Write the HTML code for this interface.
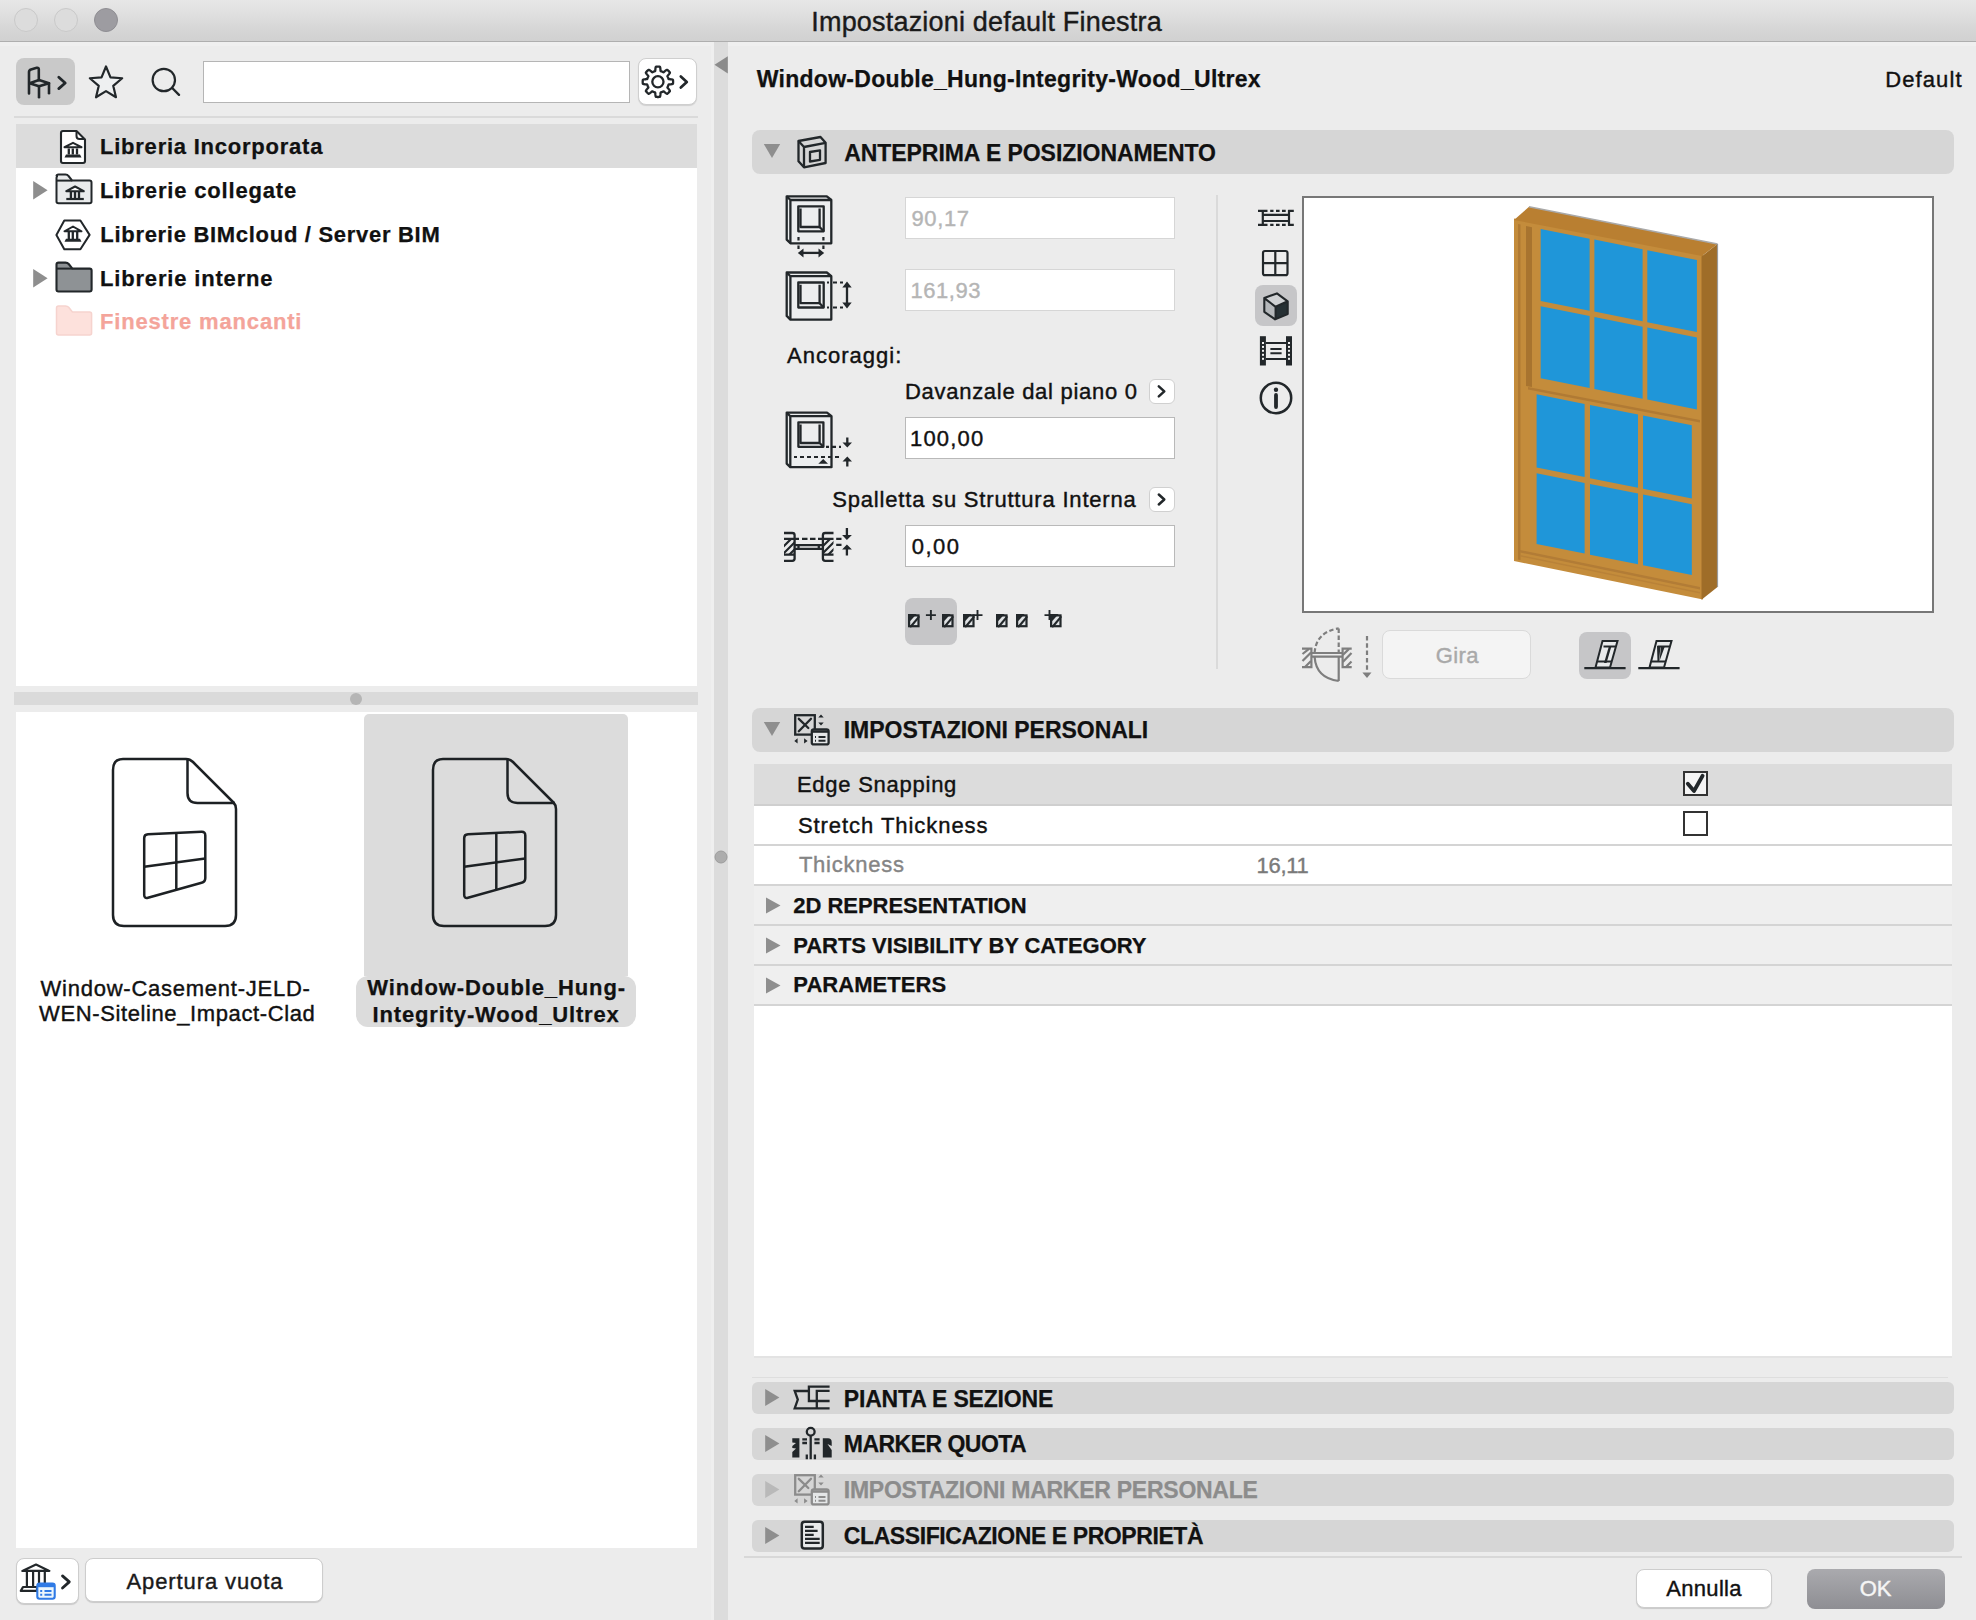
<!DOCTYPE html>
<html><head><meta charset="utf-8">
<style>
html,body{margin:0;padding:0}
body{width:1976px;height:1620px;overflow:hidden;background:#ececec;position:relative;font-family:"Liberation Sans",sans-serif;color:#111}
.a{position:absolute}
.t{position:absolute;white-space:pre;line-height:1}
.b{font-weight:bold}
svg{position:absolute;overflow:visible}
</style></head><body>

<!-- TITLE BAR -->
<div class="a" style="left:0;top:0;width:1976px;height:41px;background:linear-gradient(#e7e7e7 0%,#dedede 40%,#d5d5d5 75%,#d1d1d1 100%)"></div>
<div class="a" style="left:0;top:41px;width:1976px;height:1px;background:#aeaeae"></div>
<div class="a" style="left:0;top:42px;width:1976px;height:4px;background:#efefef"></div>
<div class="a" style="left:14px;top:8px;width:22px;height:22px;border-radius:50%;background:#dcdcdc;border:1px solid #c9c9c9"></div>
<div class="a" style="left:54px;top:8px;width:22px;height:22px;border-radius:50%;background:#dcdcdc;border:1px solid #c9c9c9"></div>
<div class="a" style="left:94px;top:8px;width:22px;height:22px;border-radius:50%;background:#9d9ca1;border:1px solid #8f8e93"></div>

<!-- LEFT PANEL -->
<div class="a" style="left:16px;top:58px;width:59px;height:47px;border-radius:8px;background:#c9c9c9"></div>
<div class="a" style="left:203px;top:61px;width:427px;height:42px;background:#fff;border:1px solid #b5b5b5;box-sizing:border-box"></div>
<div class="a" style="left:638px;top:58px;width:59px;height:47px;border-radius:8px;background:#fff;border:1px solid #cfcfcf;box-sizing:border-box;box-shadow:0 1px 1px rgba(0,0,0,0.12)"></div>
<div class="a" style="left:14px;top:116px;width:684px;height:2px;background:#dadada"></div>

<div class="a" style="left:16px;top:124px;width:681px;height:562px;background:#fff"></div>
<div class="a" style="left:16px;top:124px;width:681px;height:44px;background:#dcdcdc"></div>

<!-- splitter -->
<div class="a" style="left:14px;top:692px;width:684px;height:13px;background:#dadada"></div>
<div class="a" style="left:350px;top:693px;width:12px;height:12px;border-radius:50%;background:#b5b5b5"></div>

<div class="a" style="left:16px;top:712px;width:681px;height:836px;background:#fff"></div>
<div class="a" style="left:364px;top:714px;width:264px;height:262px;border-radius:5px 5px 0 0;background:#dcdcdc"></div>
<div class="a" style="left:356px;top:976px;width:280px;height:51px;border-radius:12px;background:#dcdcdc"></div>

<!-- bottom buttons -->
<div class="a" style="left:16px;top:1558px;width:63px;height:46px;border-radius:8px;background:#fff;border:1px solid #cdcdcd;box-sizing:border-box;box-shadow:0 1px 1px rgba(0,0,0,0.15)"></div>
<div class="a" style="left:85px;top:1558px;width:238px;height:44px;border-radius:8px;background:#fff;border:1px solid #cdcdcd;box-sizing:border-box;box-shadow:0 1px 1px rgba(0,0,0,0.15)"></div>

<!-- DIVIDER -->
<div class="a" style="left:711px;top:42px;width:3px;height:1578px;background:#efefef"></div>
<div class="a" style="left:714px;top:42px;width:14px;height:1578px;background:#dcdcdc"></div>

<!-- RIGHT PANEL -->

<div class="a" style="left:752px;top:130px;width:1202px;height:44px;border-radius:8px;background:#d6d6d6"></div>

<div class="a" style="left:905px;top:197px;width:270px;height:42px;background:#fff;border:1px solid #d6d6d6;box-sizing:border-box"></div>
<div class="a" style="left:905px;top:269px;width:270px;height:42px;background:#fff;border:1px solid #d6d6d6;box-sizing:border-box"></div>

<div class="a" style="left:1149px;top:379px;width:26px;height:25px;border-radius:6px;background:#fff;border:1px solid #d0d0d0;box-sizing:border-box"></div>
<div class="a" style="left:905px;top:417px;width:270px;height:42px;background:#fff;border:1px solid #b9b9b9;box-sizing:border-box"></div>

<div class="a" style="left:1149px;top:487px;width:26px;height:25px;border-radius:6px;background:#fff;border:1px solid #d0d0d0;box-sizing:border-box"></div>
<div class="a" style="left:905px;top:525px;width:270px;height:42px;background:#fff;border:1px solid #b9b9b9;box-sizing:border-box"></div>

<div class="a" style="left:905px;top:598px;width:52px;height:47px;border-radius:8px;background:#c6c6c8"></div>

<div class="a" style="left:1216px;top:195px;width:2px;height:474px;background:#dadada"></div>

<div class="a" style="left:1255px;top:285px;width:42px;height:41px;border-radius:8px;background:#c6c6c8"></div>

<div class="a" style="left:1302px;top:196px;width:632px;height:417px;background:#fff;border:2px solid #777;box-sizing:border-box"></div>

<div class="a" style="left:1382px;top:630px;width:149px;height:49px;border-radius:8px;background:#f4f4f4;border:1px solid #dadada;box-sizing:border-box"></div>
<div class="a" style="left:1579px;top:632px;width:52px;height:47px;border-radius:8px;background:#c6c6c8"></div>

<div class="a" style="left:752px;top:708px;width:1202px;height:44px;border-radius:8px;background:#d6d6d6"></div>

<!-- table -->
<div class="a" style="left:754px;top:764px;width:1198px;height:592px;background:#fff"></div>
<div class="a" style="left:754px;top:764px;width:1198px;height:41px;background:#dcdcdc"></div>
<div class="a" style="left:754px;top:885px;width:1198px;height:120px;background:#efefef"></div>
<div class="a" style="left:754px;top:804px;width:1198px;height:2px;background:#cfcfcf"></div>
<div class="a" style="left:754px;top:844px;width:1198px;height:2px;background:#d4d4d4"></div>
<div class="a" style="left:754px;top:884px;width:1198px;height:2px;background:#d4d4d4"></div>
<div class="a" style="left:754px;top:924px;width:1198px;height:2px;background:#d4d4d4"></div>
<div class="a" style="left:754px;top:964px;width:1198px;height:2px;background:#d4d4d4"></div>
<div class="a" style="left:754px;top:1004px;width:1198px;height:2px;background:#d4d4d4"></div>

<div class="a" style="left:1683px;top:771px;width:25px;height:25px;border:2px solid #333;box-sizing:border-box;background:#f4f4f4"></div>
<div class="a" style="left:1683px;top:811px;width:25px;height:25px;border:2px solid #333;box-sizing:border-box;background:#fff"></div>


<div class="a" style="left:754px;top:1356px;width:1198px;height:2px;background:#e3e3e3"></div>
<div class="a" style="left:752px;top:1377px;width:1196px;height:1px;background:#dedede"></div>
<div class="a" style="left:752px;top:1382px;width:1202px;height:32px;border-radius:6px;background:#d6d6d6"></div>
<div class="a" style="left:752px;top:1428px;width:1202px;height:32px;border-radius:6px;background:#d6d6d6"></div>
<div class="a" style="left:752px;top:1474px;width:1202px;height:32px;border-radius:6px;background:#d6d6d6"></div>
<div class="a" style="left:752px;top:1520px;width:1202px;height:32px;border-radius:6px;background:#d6d6d6"></div>

<div class="a" style="left:744px;top:1556px;width:1218px;height:2px;background:#d8d8d8"></div>

<div class="a" style="left:1636px;top:1569px;width:136px;height:39px;border-radius:8px;background:#fff;border:1px solid #cdcdcd;box-sizing:border-box;box-shadow:0 1px 1px rgba(0,0,0,0.15)"></div>
<div class="a" style="left:1807px;top:1569px;width:138px;height:40px;border-radius:8px;background:linear-gradient(#aaaaae,#8e8e93)"></div>

<div class="t" style="left:811.3px;top:8.9px;font-size:27px;-webkit-text-stroke:0.4px;letter-spacing:0.186px;color:#1a1a1a">Impostazioni default Finestra</div>
<div class="t" style="left:100.0px;top:135.8px;font-size:22px;font-weight:bold;-webkit-text-stroke:0.25px;letter-spacing:0.768px;color:#111">Libreria Incorporata</div>
<div class="t" style="left:100.0px;top:179.7px;font-size:22px;font-weight:bold;-webkit-text-stroke:0.25px;letter-spacing:0.824px;color:#111">Librerie collegate</div>
<div class="t" style="left:100.3px;top:224.0px;font-size:22px;font-weight:bold;-webkit-text-stroke:0.25px;letter-spacing:0.703px;color:#111">Librerie BIMcloud / Server BIM</div>
<div class="t" style="left:100.0px;top:268.2px;font-size:22px;font-weight:bold;-webkit-text-stroke:0.25px;letter-spacing:0.827px;color:#111">Librerie interne</div>
<div class="t" style="left:100.0px;top:311.3px;font-size:22px;font-weight:bold;-webkit-text-stroke:0.25px;letter-spacing:0.825px;color:#f4a49a">Finestre mancanti</div>
<div class="t" style="left:40.6px;top:977.5px;font-size:22px;-webkit-text-stroke:0.4px;letter-spacing:0.75px;color:#111">Window-Casement-JELD-</div>
<div class="t" style="left:39.1px;top:1003.4px;font-size:22px;-webkit-text-stroke:0.4px;letter-spacing:0.609px;color:#111">WEN-Siteline_Impact-Clad</div>
<div class="t" style="left:367.3px;top:977.3px;font-size:22px;font-weight:bold;-webkit-text-stroke:0.25px;letter-spacing:0.889px;color:#111">Window-Double_Hung-</div>
<div class="t" style="left:372.6px;top:1003.5px;font-size:22px;font-weight:bold;-webkit-text-stroke:0.25px;letter-spacing:0.84px;color:#111">Integrity-Wood_Ultrex</div>
<div class="t" style="left:126.5px;top:1571.0px;font-size:22px;-webkit-text-stroke:0.4px;letter-spacing:0.892px;color:#1a1a1a">Apertura vuota</div>
<div class="t" style="left:756.7px;top:67.7px;font-size:23px;font-weight:bold;-webkit-text-stroke:0.25px;letter-spacing:0.292px;color:#111">Window-Double_Hung-Integrity-Wood_Ultrex</div>
<div class="t" style="left:1885.2px;top:69.3px;font-size:22px;-webkit-text-stroke:0.4px;letter-spacing:1.1px;color:#111">Default</div>
<div class="t" style="left:844.2px;top:141.5px;font-size:23px;font-weight:bold;-webkit-text-stroke:0.25px;letter-spacing:-0.056px;color:#111">ANTEPRIMA E POSIZIONAMENTO</div>
<div class="t" style="left:911.5px;top:208.2px;font-size:22px;-webkit-text-stroke:0.4px;letter-spacing:0.6px;color:#b5b5b5">90,17</div>
<div class="t" style="left:910.5px;top:280.4px;font-size:22px;-webkit-text-stroke:0.4px;letter-spacing:0.52px;color:#b5b5b5">161,93</div>
<div class="t" style="left:787.0px;top:345.1px;font-size:22px;-webkit-text-stroke:0.4px;letter-spacing:1.022px;color:#111">Ancoraggi:</div>
<div class="t" style="left:905.0px;top:381.3px;font-size:22px;-webkit-text-stroke:0.4px;letter-spacing:0.71px;color:#111">Davanzale dal piano 0</div>
<div class="t" style="left:910.0px;top:428.0px;font-size:22px;-webkit-text-stroke:0.4px;letter-spacing:1.2px;color:#111">100,00</div>
<div class="t" style="left:832.3px;top:489.4px;font-size:22px;-webkit-text-stroke:0.4px;letter-spacing:0.807px;color:#111">Spalletta su Struttura Interna</div>
<div class="t" style="left:911.8px;top:536.1px;font-size:22px;-webkit-text-stroke:0.4px;letter-spacing:1.467px;color:#111">0,00</div>
<div class="t" style="left:1435.7px;top:644.5px;font-size:22px;-webkit-text-stroke:0.4px;letter-spacing:0.4px;color:#a9a9a9">Gira</div>
<div class="t" style="left:843.7px;top:719.4px;font-size:23px;font-weight:bold;-webkit-text-stroke:0.25px;letter-spacing:-0.019px;color:#111">IMPOSTAZIONI PERSONALI</div>
<div class="t" style="left:796.9px;top:774.4px;font-size:22px;-webkit-text-stroke:0.4px;letter-spacing:0.75px;color:#111">Edge Snapping</div>
<div class="t" style="left:797.9px;top:814.5px;font-size:22px;-webkit-text-stroke:0.4px;letter-spacing:0.95px;color:#111">Stretch Thickness</div>
<div class="t" style="left:798.9px;top:854.0px;font-size:22px;-webkit-text-stroke:0.4px;letter-spacing:0.775px;color:#858585">Thickness</div>
<div class="t" style="left:1256.6px;top:854.7px;font-size:22px;-webkit-text-stroke:0.4px;letter-spacing:-0.3px;color:#7a7a7a">16,11</div>
<div class="t" style="left:793.3px;top:894.9px;font-size:22px;font-weight:bold;-webkit-text-stroke:0.25px;letter-spacing:-0.037px;color:#111">2D REPRESENTATION</div>
<div class="t" style="left:793.3px;top:934.5px;font-size:22px;font-weight:bold;-webkit-text-stroke:0.25px;letter-spacing:-0.052px;color:#111">PARTS VISIBILITY BY CATEGORY</div>
<div class="t" style="left:793.3px;top:973.9px;font-size:22px;font-weight:bold;-webkit-text-stroke:0.25px;letter-spacing:0.044px;color:#111">PARAMETERS</div>
<div class="t" style="left:843.8px;top:1387.6px;font-size:23px;font-weight:bold;-webkit-text-stroke:0.25px;letter-spacing:-0.173px;color:#111">PIANTA E SEZIONE</div>
<div class="t" style="left:843.8px;top:1433.3px;font-size:23px;font-weight:bold;-webkit-text-stroke:0.25px;letter-spacing:-0.527px;color:#111">MARKER QUOTA</div>
<div class="t" style="left:843.8px;top:1479.0px;font-size:23px;font-weight:bold;-webkit-text-stroke:0.25px;letter-spacing:-0.257px;color:#8c8c8c">IMPOSTAZIONI MARKER PERSONALE</div>
<div class="t" style="left:843.8px;top:1525.2px;font-size:23px;font-weight:bold;-webkit-text-stroke:0.25px;letter-spacing:-0.415px;color:#111">CLASSIFICAZIONE E PROPRIETÀ</div>
<div class="t" style="left:1666.2px;top:1578.3px;font-size:22px;-webkit-text-stroke:0.4px;letter-spacing:0.333px;color:#111">Annulla</div>
<div class="t" style="left:1859.7px;top:1578.3px;font-size:22px;-webkit-text-stroke:0.4px;letter-spacing:0.0px;color:#f5f5f5">OK</div>
<svg width="1976" height="1620" viewBox="0 0 1976 1620" style="position:absolute;left:0;top:0"><g fill="none" stroke="#22272a" stroke-width="2.6" stroke-linecap="round" stroke-linejoin="round"><path d="M29,93.5 V72 Q29,70 31,69.4 L36.8,67.8 Q38.8,67.3 38.8,69.3 V80.3"/><path d="M29.6,83.2 L39,80 L49,83.2 L39,86.3 Z"/><path d="M49,83.2 V93.2"/><path d="M39,86.3 V97.3"/></g>
<path d="M58.8,77.3 L65.2,83 L58.8,88.6" fill="none" stroke="#22272a" stroke-width="2.8" stroke-linecap="round" stroke-linejoin="round"/>
<path d="M106.00,66.50 L110.47,77.35 L122.17,78.25 L113.23,85.85 L115.99,97.25 L106.00,91.10 L96.01,97.25 L98.77,85.85 L89.83,78.25 L101.53,77.35Z" fill="#eef0f1" stroke="#22272a" stroke-width="2.2" stroke-linejoin="round"/>
<circle cx="163.8" cy="80" r="11.2" fill="none" stroke="#22272a" stroke-width="2.2"/>
<path d="M172.2,88 L179,94.8" stroke="#22272a" stroke-width="2.4" stroke-linecap="round"/>
<path d="M657.90,66.60 L658.03,66.60 L658.17,66.60 L658.30,66.61 L658.43,66.61 L658.56,66.61 L658.70,66.62 L658.83,66.63 L658.96,66.64 L659.09,66.65 L659.22,66.66 L659.36,66.67 L659.49,66.68 L659.62,66.70 L659.75,66.71 L659.88,66.78 L659.99,66.93 L660.09,67.15 L660.18,67.44 L660.25,67.77 L660.31,68.14 L660.36,68.53 L660.40,68.94 L660.43,69.35 L660.46,69.74 L660.49,70.11 L660.52,70.44 L660.56,70.73 L660.60,70.95 L660.67,71.10 L660.75,71.17 L660.84,71.20 L660.93,71.23 L661.02,71.25 L661.12,71.28 L661.21,71.31 L661.30,71.34 L661.39,71.37 L661.48,71.40 L661.57,71.43 L661.66,71.46 L661.75,71.50 L661.84,71.53 L661.93,71.57 L662.02,71.60 L662.11,71.64 L662.20,71.67 L662.29,71.71 L662.37,71.75 L662.46,71.79 L662.55,71.83 L662.64,71.87 L662.72,71.91 L662.81,71.96 L662.89,72.00 L662.98,72.04 L663.06,72.09 L663.15,72.13 L663.23,72.18 L663.32,72.23 L663.40,72.27 L663.51,72.28 L663.66,72.22 L663.85,72.09 L664.08,71.91 L664.33,71.70 L664.61,71.46 L664.91,71.20 L665.23,70.94 L665.54,70.68 L665.86,70.44 L666.16,70.22 L666.45,70.03 L666.71,69.89 L666.94,69.80 L667.12,69.78 L667.26,69.82 L667.36,69.90 L667.47,69.99 L667.57,70.07 L667.67,70.16 L667.77,70.24 L667.87,70.33 L667.97,70.42 L668.07,70.50 L668.17,70.59 L668.27,70.68 L668.36,70.77 L668.46,70.87 L668.55,70.96 L668.65,71.05 L668.74,71.15 L668.83,71.24 L668.93,71.34 L669.02,71.43 L669.11,71.53 L669.20,71.63 L669.28,71.73 L669.37,71.83 L669.46,71.93 L669.54,72.03 L669.63,72.13 L669.71,72.23 L669.80,72.34 L669.88,72.44 L669.92,72.58 L669.90,72.76 L669.81,72.99 L669.67,73.25 L669.48,73.54 L669.26,73.84 L669.02,74.16 L668.76,74.47 L668.50,74.79 L668.24,75.09 L668.00,75.37 L667.79,75.62 L667.61,75.85 L667.48,76.04 L667.42,76.19 L667.43,76.30 L667.47,76.38 L667.52,76.47 L667.57,76.55 L667.61,76.64 L667.66,76.72 L667.70,76.81 L667.74,76.89 L667.79,76.98 L667.83,77.06 L667.87,77.15 L667.91,77.24 L667.95,77.33 L667.99,77.41 L668.03,77.50 L668.06,77.59 L668.10,77.68 L668.13,77.77 L668.17,77.86 L668.20,77.95 L668.24,78.04 L668.27,78.13 L668.30,78.22 L668.33,78.31 L668.36,78.40 L668.39,78.49 L668.42,78.58 L668.45,78.68 L668.47,78.77 L668.50,78.86 L668.53,78.95 L668.60,79.03 L668.75,79.10 L668.97,79.14 L669.26,79.18 L669.59,79.21 L669.96,79.24 L670.35,79.27 L670.76,79.30 L671.17,79.34 L671.56,79.39 L671.93,79.45 L672.26,79.52 L672.55,79.61 L672.77,79.71 L672.92,79.82 L672.99,79.95 L673.00,80.08 L673.02,80.21 L673.03,80.34 L673.04,80.48 L673.05,80.61 L673.06,80.74 L673.07,80.87 L673.08,81.00 L673.09,81.14 L673.09,81.27 L673.09,81.40 L673.10,81.53 L673.10,81.67 L673.10,81.80 L673.10,81.93 L673.10,82.07 L673.09,82.20 L673.09,82.33 L673.09,82.46 L673.08,82.60 L673.07,82.73 L673.06,82.86 L673.05,82.99 L673.04,83.12 L673.03,83.26 L673.02,83.39 L673.00,83.52 L672.99,83.65 L672.92,83.78 L672.77,83.89 L672.55,83.99 L672.26,84.08 L671.93,84.15 L671.56,84.21 L671.17,84.26 L670.76,84.30 L670.35,84.33 L669.96,84.36 L669.59,84.39 L669.26,84.42 L668.97,84.46 L668.75,84.50 L668.60,84.57 L668.53,84.65 L668.50,84.74 L668.47,84.83 L668.45,84.92 L668.42,85.02 L668.39,85.11 L668.36,85.20 L668.33,85.29 L668.30,85.38 L668.27,85.47 L668.24,85.56 L668.20,85.65 L668.17,85.74 L668.13,85.83 L668.10,85.92 L668.06,86.01 L668.03,86.10 L667.99,86.19 L667.95,86.27 L667.91,86.36 L667.87,86.45 L667.83,86.54 L667.79,86.62 L667.74,86.71 L667.70,86.79 L667.66,86.88 L667.61,86.96 L667.57,87.05 L667.52,87.13 L667.47,87.22 L667.43,87.30 L667.42,87.41 L667.48,87.56 L667.61,87.75 L667.79,87.98 L668.00,88.23 L668.24,88.51 L668.50,88.81 L668.76,89.13 L669.02,89.44 L669.26,89.76 L669.48,90.06 L669.67,90.35 L669.81,90.61 L669.90,90.84 L669.92,91.02 L669.88,91.16 L669.80,91.26 L669.71,91.37 L669.63,91.47 L669.54,91.57 L669.46,91.67 L669.37,91.77 L669.28,91.87 L669.20,91.97 L669.11,92.07 L669.02,92.17 L668.93,92.26 L668.83,92.36 L668.74,92.45 L668.65,92.55 L668.55,92.64 L668.46,92.73 L668.36,92.83 L668.27,92.92 L668.17,93.01 L668.07,93.10 L667.97,93.18 L667.87,93.27 L667.77,93.36 L667.67,93.44 L667.57,93.53 L667.47,93.61 L667.36,93.70 L667.26,93.78 L667.12,93.82 L666.94,93.80 L666.71,93.71 L666.45,93.57 L666.16,93.38 L665.86,93.16 L665.54,92.92 L665.23,92.66 L664.91,92.40 L664.61,92.14 L664.33,91.90 L664.08,91.69 L663.85,91.51 L663.66,91.38 L663.51,91.32 L663.40,91.33 L663.32,91.37 L663.23,91.42 L663.15,91.47 L663.06,91.51 L662.98,91.56 L662.89,91.60 L662.81,91.64 L662.72,91.69 L662.64,91.73 L662.55,91.77 L662.46,91.81 L662.37,91.85 L662.29,91.89 L662.20,91.93 L662.11,91.96 L662.02,92.00 L661.93,92.03 L661.84,92.07 L661.75,92.10 L661.66,92.14 L661.57,92.17 L661.48,92.20 L661.39,92.23 L661.30,92.26 L661.21,92.29 L661.12,92.32 L661.02,92.35 L660.93,92.37 L660.84,92.40 L660.75,92.43 L660.67,92.50 L660.60,92.65 L660.56,92.87 L660.52,93.16 L660.49,93.49 L660.46,93.86 L660.43,94.25 L660.40,94.66 L660.36,95.07 L660.31,95.46 L660.25,95.83 L660.18,96.16 L660.09,96.45 L659.99,96.67 L659.88,96.82 L659.75,96.89 L659.62,96.90 L659.49,96.92 L659.36,96.93 L659.22,96.94 L659.09,96.95 L658.96,96.96 L658.83,96.97 L658.70,96.98 L658.56,96.99 L658.43,96.99 L658.30,96.99 L658.17,97.00 L658.03,97.00 L657.90,97.00 L657.77,97.00 L657.63,97.00 L657.50,96.99 L657.37,96.99 L657.24,96.99 L657.10,96.98 L656.97,96.97 L656.84,96.96 L656.71,96.95 L656.58,96.94 L656.44,96.93 L656.31,96.92 L656.18,96.90 L656.05,96.89 L655.92,96.82 L655.81,96.67 L655.71,96.45 L655.62,96.16 L655.55,95.83 L655.49,95.46 L655.44,95.07 L655.40,94.66 L655.37,94.25 L655.34,93.86 L655.31,93.49 L655.28,93.16 L655.24,92.87 L655.20,92.65 L655.13,92.50 L655.05,92.43 L654.96,92.40 L654.87,92.37 L654.78,92.35 L654.68,92.32 L654.59,92.29 L654.50,92.26 L654.41,92.23 L654.32,92.20 L654.23,92.17 L654.14,92.14 L654.05,92.10 L653.96,92.07 L653.87,92.03 L653.78,92.00 L653.69,91.96 L653.60,91.93 L653.51,91.89 L653.43,91.85 L653.34,91.81 L653.25,91.77 L653.16,91.73 L653.08,91.69 L652.99,91.64 L652.91,91.60 L652.82,91.56 L652.74,91.51 L652.65,91.47 L652.57,91.42 L652.48,91.37 L652.40,91.33 L652.29,91.32 L652.14,91.38 L651.95,91.51 L651.72,91.69 L651.47,91.90 L651.19,92.14 L650.89,92.40 L650.57,92.66 L650.26,92.92 L649.94,93.16 L649.64,93.38 L649.35,93.57 L649.09,93.71 L648.86,93.80 L648.68,93.82 L648.54,93.78 L648.44,93.70 L648.33,93.61 L648.23,93.53 L648.13,93.44 L648.03,93.36 L647.93,93.27 L647.83,93.18 L647.73,93.10 L647.63,93.01 L647.53,92.92 L647.44,92.83 L647.34,92.73 L647.25,92.64 L647.15,92.55 L647.06,92.45 L646.97,92.36 L646.87,92.26 L646.78,92.17 L646.69,92.07 L646.60,91.97 L646.52,91.87 L646.43,91.77 L646.34,91.67 L646.26,91.57 L646.17,91.47 L646.09,91.37 L646.00,91.26 L645.92,91.16 L645.88,91.02 L645.90,90.84 L645.99,90.61 L646.13,90.35 L646.32,90.06 L646.54,89.76 L646.78,89.44 L647.04,89.13 L647.30,88.81 L647.56,88.51 L647.80,88.23 L648.01,87.98 L648.19,87.75 L648.32,87.56 L648.38,87.41 L648.37,87.30 L648.33,87.22 L648.28,87.13 L648.23,87.05 L648.19,86.96 L648.14,86.88 L648.10,86.79 L648.06,86.71 L648.01,86.62 L647.97,86.54 L647.93,86.45 L647.89,86.36 L647.85,86.27 L647.81,86.19 L647.77,86.10 L647.74,86.01 L647.70,85.92 L647.67,85.83 L647.63,85.74 L647.60,85.65 L647.56,85.56 L647.53,85.47 L647.50,85.38 L647.47,85.29 L647.44,85.20 L647.41,85.11 L647.38,85.02 L647.35,84.92 L647.33,84.83 L647.30,84.74 L647.27,84.65 L647.20,84.57 L647.05,84.50 L646.83,84.46 L646.54,84.42 L646.21,84.39 L645.84,84.36 L645.45,84.33 L645.04,84.30 L644.63,84.26 L644.24,84.21 L643.87,84.15 L643.54,84.08 L643.25,83.99 L643.03,83.89 L642.88,83.78 L642.81,83.65 L642.80,83.52 L642.78,83.39 L642.77,83.26 L642.76,83.12 L642.75,82.99 L642.74,82.86 L642.73,82.73 L642.72,82.60 L642.71,82.46 L642.71,82.33 L642.71,82.20 L642.70,82.07 L642.70,81.93 L642.70,81.80 L642.70,81.67 L642.70,81.53 L642.71,81.40 L642.71,81.27 L642.71,81.14 L642.72,81.00 L642.73,80.87 L642.74,80.74 L642.75,80.61 L642.76,80.48 L642.77,80.34 L642.78,80.21 L642.80,80.08 L642.81,79.95 L642.88,79.82 L643.03,79.71 L643.25,79.61 L643.54,79.52 L643.87,79.45 L644.24,79.39 L644.63,79.34 L645.04,79.30 L645.45,79.27 L645.84,79.24 L646.21,79.21 L646.54,79.18 L646.83,79.14 L647.05,79.10 L647.20,79.03 L647.27,78.95 L647.30,78.86 L647.33,78.77 L647.35,78.68 L647.38,78.58 L647.41,78.49 L647.44,78.40 L647.47,78.31 L647.50,78.22 L647.53,78.13 L647.56,78.04 L647.60,77.95 L647.63,77.86 L647.67,77.77 L647.70,77.68 L647.74,77.59 L647.77,77.50 L647.81,77.41 L647.85,77.33 L647.89,77.24 L647.93,77.15 L647.97,77.06 L648.01,76.98 L648.06,76.89 L648.10,76.81 L648.14,76.72 L648.19,76.64 L648.23,76.55 L648.28,76.47 L648.33,76.38 L648.37,76.30 L648.38,76.19 L648.32,76.04 L648.19,75.85 L648.01,75.62 L647.80,75.37 L647.56,75.09 L647.30,74.79 L647.04,74.47 L646.78,74.16 L646.54,73.84 L646.32,73.54 L646.13,73.25 L645.99,72.99 L645.90,72.76 L645.88,72.58 L645.92,72.44 L646.00,72.34 L646.09,72.23 L646.17,72.13 L646.26,72.03 L646.34,71.93 L646.43,71.83 L646.52,71.73 L646.60,71.63 L646.69,71.53 L646.78,71.43 L646.87,71.34 L646.97,71.24 L647.06,71.15 L647.15,71.05 L647.25,70.96 L647.34,70.87 L647.44,70.77 L647.53,70.68 L647.63,70.59 L647.73,70.50 L647.83,70.42 L647.93,70.33 L648.03,70.24 L648.13,70.16 L648.23,70.07 L648.33,69.99 L648.44,69.90 L648.54,69.82 L648.68,69.78 L648.86,69.80 L649.09,69.89 L649.35,70.03 L649.64,70.22 L649.94,70.44 L650.26,70.68 L650.57,70.94 L650.89,71.20 L651.19,71.46 L651.47,71.70 L651.72,71.91 L651.95,72.09 L652.14,72.22 L652.29,72.28 L652.40,72.27 L652.48,72.23 L652.57,72.18 L652.65,72.13 L652.74,72.09 L652.82,72.04 L652.91,72.00 L652.99,71.96 L653.08,71.91 L653.16,71.87 L653.25,71.83 L653.34,71.79 L653.43,71.75 L653.51,71.71 L653.60,71.67 L653.69,71.64 L653.78,71.60 L653.87,71.57 L653.96,71.53 L654.05,71.50 L654.14,71.46 L654.23,71.43 L654.32,71.40 L654.41,71.37 L654.50,71.34 L654.59,71.31 L654.68,71.28 L654.78,71.25 L654.87,71.23 L654.96,71.20 L655.05,71.17 L655.13,71.10 L655.20,70.95 L655.24,70.73 L655.28,70.44 L655.31,70.11 L655.34,69.74 L655.37,69.35 L655.40,68.94 L655.44,68.53 L655.49,68.14 L655.55,67.77 L655.62,67.44 L655.71,67.15 L655.81,66.93 L655.92,66.78 L656.05,66.71 L656.18,66.70 L656.31,66.68 L656.44,66.67 L656.58,66.66 L656.71,66.65 L656.84,66.64 L656.97,66.63 L657.10,66.62 L657.24,66.61 L657.37,66.61 L657.50,66.61 L657.63,66.60 L657.77,66.60Z" fill="none" stroke="#22272a" stroke-width="2.3" stroke-linejoin="round"/>
<circle cx="657.9" cy="81.8" r="5.6" fill="none" stroke="#22272a" stroke-width="2.3"/>
<path d="M680.8,76.5 L686.8,82 L680.8,87.6" fill="none" stroke="#22272a" stroke-width="2.7" stroke-linecap="round" stroke-linejoin="round"/>
<path d="M63,131 H76.5 L85,139.5 V161 Q85,163 83,163 H63 Q61,163 61,161 V133 Q61,131 63,131 Z" fill="#fff" stroke="#22272a" stroke-width="2.1" stroke-linejoin="round"/>
<path d="M76.5,131 V136 Q76.5,139 79.5,139 H85" fill="none" stroke="#22272a" stroke-width="2"/>
<path d="M64.5,147.2 L73.0,142.8 L81.5,147.2 Z" fill="#fff" stroke="#22272a" stroke-width="2" stroke-linejoin="round"/><path d="M68.8,148.5 V154.5" stroke="#22272a" stroke-width="2.3"/><path d="M72.8,148.5 V154.5" stroke="#22272a" stroke-width="2.3"/><path d="M77,148.5 V154.5" stroke="#22272a" stroke-width="2.3"/><path d="M66.0,154.5 L80.0,154.5 L81.5,157.5 L64.5,157.5 Z" fill="#22272a"/>
<path d="M58,176 Q56.5,176 56.5,178 V201.5 Q56.5,203.2 58.5,203.2 H89.6 Q91.5,203.2 91.5,201.5 V182.5 Q91.5,180.6 89.5,180.6 H72.2 L68.5,176 Q67.5,174.4 65.5,174.4 H58.5 Q56.5,174.4 56.5,176" fill="#e9ebec" stroke="#22272a" stroke-width="2" stroke-linejoin="round"/>
<path d="M56.5,180.6 H72.2" stroke="#22272a" stroke-width="2"/>
<path d="M66.3,191.2 L75.05,186.5 L83.8,191.2 Z" fill="#fff" stroke="#22272a" stroke-width="2" stroke-linejoin="round"/><path d="M70.9,192 V198.5" stroke="#22272a" stroke-width="2.3"/><path d="M75,192 V198.5" stroke="#22272a" stroke-width="2.3"/><path d="M79,192 V198.5" stroke="#22272a" stroke-width="2.3"/><path d="M66.3,199 H83.8" stroke="#22272a" stroke-width="2.2"/>
<path d="M56.4,234.9 L64.3,220.5 H80.4 L89.6,234.9 L80.4,249.3 H64.3 Z" fill="#fff" stroke="#22272a" stroke-width="2.0" stroke-linejoin="round"/>
<path d="M64.5,231.3 L73.0,226.5 L81.5,231.3 Z" fill="#fff" stroke="#22272a" stroke-width="2" stroke-linejoin="round"/><path d="M68.8,232 V239" stroke="#22272a" stroke-width="2.3"/><path d="M72.8,232 V239" stroke="#22272a" stroke-width="2.3"/><path d="M77.2,232 V239" stroke="#22272a" stroke-width="2.3"/><path d="M66.0,238.8 L80.0,238.8 L81.5,241.8 L64.5,241.8 Z" fill="#22272a"/>
<path d="M58.5,262.6 H65.5 Q67.5,262.6 68.7,264 L72.4,268.6 H89.6 Q91.6,268.6 91.6,270.6 V289.5 Q91.6,291.5 89.6,291.5 H58.5 Q56.5,291.5 56.5,289.5 V264.6 Q56.5,262.6 58.5,262.6 Z" fill="#8e9295" stroke="#22272a" stroke-width="2.1" stroke-linejoin="round"/>
<path d="M56.5,268.6 H72.4" stroke="#22272a" stroke-width="2"/>
<path d="M58.5,305.9 H65.5 Q67.5,305.9 68.7,307.3 L72.4,312 H89.6 Q91.6,312 91.6,314 V333 Q91.6,335 89.6,335 H58.5 Q56.5,335 56.5,333 V307.9 Q56.5,305.9 58.5,305.9 Z" fill="#fde1dc" stroke="#f6d3ce" stroke-width="1.5"/>
<path d="M33.2,181 L47.6,190.2 L33.2,199.5 Z" fill="#8e8e8e"/>
<path d="M33.2,269 L47.6,278.3 L33.2,287.5 Z" fill="#8e8e8e"/>
<g transform="translate(432,758)" fill="none" stroke="#1d2124" stroke-width="2.5" stroke-linejoin="round"><path d="M11,1 H74 Q78,1 81,4 L121.5,44.5 Q124,47 124,51 V157 Q124,168 113,168 H12 Q1,168 1,157 V12 Q1,1 11,1 Z"/><path d="M75.5,1.5 V35 Q75.5,45 85.5,45 H123"/><path d="M36,76.3 L89.5,73.8 Q93.3,73.6 93.3,77.5 V120 Q93.3,123.8 89.6,124.8 L36,139.8 Q32.2,140.8 32.2,137 V80 Q32.2,76.5 36,76.3 Z"/><path d="M64.3,75 V132"/><path d="M32.2,108.8 L93.3,100.4"/></g>
<g transform="translate(112,758)" fill="none" stroke="#1d2124" stroke-width="2.5" stroke-linejoin="round"><path d="M11,1 H74 Q78,1 81,4 L121.5,44.5 Q124,47 124,51 V157 Q124,168 113,168 H12 Q1,168 1,157 V12 Q1,1 11,1 Z"/><path d="M75.5,1.5 V35 Q75.5,45 85.5,45 H123"/><path d="M36,76.3 L89.5,73.8 Q93.3,73.6 93.3,77.5 V120 Q93.3,123.8 89.6,124.8 L36,139.8 Q32.2,140.8 32.2,137 V80 Q32.2,76.5 36,76.3 Z"/><path d="M64.3,75 V132"/><path d="M32.2,108.8 L93.3,100.4"/></g>
<g fill="none" stroke="#22272a" stroke-width="2.2" stroke-linejoin="round"><path d="M22.3,1570.9 L36,1564.6 L49.4,1570.9 Z"/><path d="M26.9,1571 V1587 M33.1,1571 V1587 M39,1571 V1583 M44.8,1571 V1583"/><path d="M20.8,1590.9 L23,1587 H37 V1590.9 Z"/></g>
<rect x="37.3" y="1583.5" width="17.4" height="15.2" rx="2.2" fill="#ecf6fc" stroke="#2f7ae5" stroke-width="2.1"/>
<path d="M37.3,1585.6 H54.7" stroke="#2f7ae5" stroke-width="3.2"/>
<path d="M40.2,1591 H42.2 M44.5,1591 H51.5 M40.2,1594.8 H42.2 M44.5,1594.8 H51.5" stroke="#2f7ae5" stroke-width="2"/>
<path d="M62.5,1575.9 L69.3,1581.9 L62.5,1588" fill="none" stroke="#22272a" stroke-width="2.8" stroke-linecap="round" stroke-linejoin="round"/>
<path d="M714.5,64.8 L727.8,56.2 V73.5 Z" fill="#8b8b8b"/>
<circle cx="721" cy="857" r="6" fill="#adadad" stroke="#9c9c9c" stroke-width="1"/>
<path d="M763.8,144 H780.2 L772,158 Z" fill="#8e8e8e"/>
<path d="M763.8,722 H780.2 L772,736 Z" fill="#8e8e8e"/>
<path d="M766,897.5 L780.5,905.5 L766,913.5 Z" fill="#8e8e8e"/>
<path d="M766,937.5 L780.5,945.5 L766,953.5 Z" fill="#8e8e8e"/>
<path d="M766,977.5 L780.5,985.5 L766,993.5 Z" fill="#8e8e8e"/>
<path d="M765.2,1389.0 L779.4,1397.5 L765.2,1406.0 Z" fill="#8e8e8e"/>
<path d="M765.2,1435.0 L779.4,1443.5 L765.2,1452.0 Z" fill="#8e8e8e"/>
<path d="M765.2,1481.0 L779.4,1489.5 L765.2,1498.0 Z" fill="#b9b9b9"/>
<path d="M765.2,1527.0 L779.4,1535.5 L765.2,1544.0 Z" fill="#8e8e8e"/>
<g fill="none" stroke="#22272a" stroke-width="2.3" stroke-linejoin="round"><path d="M798.5,141 L820.5,137 L825.6,142.8 V163 L804,167.3 L798.5,161.2 Z"/><path d="M798.5,141 L804,147 L825.6,142.8 M804,147 V167.3"/><path d="M810,152 L820,150.3 V159.8 L810,161.5 Z"/></g>
<g fill="none" stroke="#22272a" stroke-width="2.3"><rect x="795.2" y="715.2" width="19.6" height="19.4"/><path d="M798.8,718.8 L808.3,728 M811,718.8 L798.8,731.3" stroke-linecap="round"/><rect x="811.8" y="729.4" width="16.8" height="15" rx="2" fill="#e4e6e7"/><path d="M811.8,731.5 H828.6" stroke-width="2.6"/><path d="M815,737 H816 M818.5,737 H825.5 M815,740.8 H816 M818.5,740.8 H825.5" stroke-width="2"/></g><path d="M818.3,717.4 L821,714.6 L823.7,717.4 Z M818.3,722.6 L821,725.4 L823.7,722.6 Z M797.6,738.2 L794.3,741 L797.6,743.6 Z M804.1,738.2 L807.6,741 L804.1,743.6 Z" fill="#22272a"/>
<g transform="translate(0,760)"><g fill="none" stroke="#8c8c8c" stroke-width="2.3"><rect x="795.2" y="715.2" width="19.6" height="19.4"/><path d="M798.8,718.8 L808.3,728 M811,718.8 L798.8,731.3" stroke-linecap="round"/><rect x="811.8" y="729.4" width="16.8" height="15" rx="2" fill="#e4e6e7"/><path d="M811.8,731.5 H828.6" stroke-width="2.6"/><path d="M815,737 H816 M818.5,737 H825.5 M815,740.8 H816 M818.5,740.8 H825.5" stroke-width="2"/></g><path d="M818.3,717.4 L821,714.6 L823.7,717.4 Z M818.3,722.6 L821,725.4 L823.7,722.6 Z M797.6,738.2 L794.3,741 L797.6,743.6 Z M804.1,738.2 L807.6,741 L804.1,743.6 Z" fill="#8c8c8c"/></g>
<g fill="none" stroke="#22272a" stroke-width="2.3" stroke-linejoin="miter"><path d="M808.9,1391 H794.7 L797.8,1399.6 L794.7,1408.3 H829.6"/><path d="M829.6,1386.6 H808.9 V1401 H829.6"/><path d="M829.6,1390.8 H816.8 V1408.3"/></g>
<g fill="none" stroke="#22272a" stroke-width="2.3"><circle cx="810.7" cy="1431.7" r="3.9"/><path d="M810.7,1435.6 V1459.3 M806.8,1454.5 V1459.3 M814.9,1454.5 V1459.3"/><path d="M802.3,1439.3 H807 M802.3,1443 H807 M814.4,1439.3 H819.6 M814.4,1443 H819.6"/></g>
<path d="M792.3,1438.3 H799.4 V1457.4 H792.3 V1452 L796,1448.5 L792.3,1448 V1446 L796,1443 L792.3,1442.5 Z" fill="#22272a"/>
<path d="M822.8,1438.3 H828 Q831.7,1438.3 831.7,1442 V1446 L827.5,1444 L831.7,1450 V1457.4 H822.8 Z" fill="#22272a"/>
<rect x="801.8" y="1521.8" width="21" height="26.8" rx="2.8" fill="#e8eaeb" stroke="#22272a" stroke-width="2.5"/>
<path d="M805,1526.9 H813.7 M805,1530.9 H817.6 M805,1534.9 H813.7 M805,1538.9 H819.7 M805,1542.9 H819.7" stroke="#22272a" stroke-width="2.1"/>
<g fill="none" stroke="#22272a" stroke-width="2.3" stroke-linejoin="round"><path d="M786.7,196.3 H826.8 L831.3,200.0 V243.3 H790.4000000000001 L786.7,239.60000000000002 Z" fill="#eceeef"/><path d="M786.7,196.3 L790.4000000000001,200.0 H831.3 M790.4000000000001,200.0 V243.3"/><rect x="798.3" y="206.3" width="25.4" height="25"/><path d="M800.5,208.5 V227 H819.6 V208.5"/><path d="M819.6,227 L823.7,231.3"/><path d="M798.5,237 V240.5 M823.4,237 V240.5 M798.5,245.5 V249 M823.4,245.5 V249" stroke-width="2.2"/><path d="M802,252.9 H820" stroke-width="2.3"/></g>
<path d="M797.8,252.9 L803.5,248.4 V257.4 Z M824.2,252.9 L818.5,248.4 V257.4 Z" fill="#22272a"/>
<g fill="none" stroke="#22272a" stroke-width="2.3" stroke-linejoin="round"><path d="M786.7,272.5 H826.8 L831.3,276.2 V319.6 H790.4000000000001 L786.7,315.90000000000003 Z" fill="#eceeef"/><path d="M786.7,272.5 L790.4000000000001,276.2 H831.3 M790.4000000000001,276.2 V319.6"/><rect x="798.3" y="282.5" width="25.4" height="25"/><path d="M800.5,284.7 V303.2 H819.6 V284.7"/><path d="M819.6,303.2 L823.7,307.5"/><path d="M827,282.5 H829 M833,282.5 H837 M840,282.5 H843 M827,307.5 H829 M833,307.5 H837 M840,307.5 H843" stroke-width="2.2"/><path d="M847,287 V303"/></g>
<path d="M847,281.5 L842.3,287.5 H851.7 Z M847,308.5 L842.3,302.5 H851.7 Z" fill="#22272a"/>
<g fill="none" stroke="#22272a" stroke-width="2.3" stroke-linejoin="round"><path d="M786.7,412.6 H827.0 L831.5,416.20000000000005 V467.2 H790.3000000000001 L786.7,463.59999999999997 Z" fill="#eceeef"/><path d="M786.7,412.6 L790.3000000000001,416.20000000000005 H831.5 M790.3000000000001,416.20000000000005 V467.2"/><rect x="798.4" y="422.3" width="25" height="24.5"/><path d="M800.5,424.5 V443 H819.6 V424.5 M819.6,443 L823.4,446.8"/><path d="M794,457 H797 M800,457 H804 M807,457 H811 M814,457 H818 M821,457 H825 M828,457 H832 M835,457 H839 M826,446.8 H829 M832,446.8 H836 M839,446.8 H841" stroke-width="2.2"/><path d="M847.3,437.5 V443 M847.3,461 V466.5"/></g>
<path d="M818.3,463.8 L823.2,459 L828,463.8 Z M847.3,447.5 L842.5,442.5 H852 Z M847.3,456.5 L842.5,461.5 H852 Z" fill="#22272a"/>
<defs><clipPath id="hl"><rect x="784" y="539.5" width="10" height="15"/></clipPath><clipPath id="hr"><rect x="823.5" y="539.5" width="10" height="15"/></clipPath></defs>
<g fill="none" stroke="#22272a" stroke-width="2.3"><path d="M784,533 H792.3 Q794.6,533 794.6,535.3 V558.5 Q794.6,560.8 792.3,560.8 H784"/><path d="M833.5,533 H825.2 Q822.9,533 822.9,535.3 V558.5 Q822.9,560.8 825.2,560.8 H833.5"/><path d="M784,538.9 H799 M802,538.9 H807.5 M810,538.9 H815.5 M818,538.9 H833.5 M836.2,538.9 H841.5 M836.2,544.9 H841.5"/><path d="M784,554.7 H794.6 M822.9,554.7 H833.5"/><path d="M794.6,545.1 H822.9 M794.6,548.9 H822.9 M798.5,545.1 V548.9 M818.8,545.1 V548.9" /><path d="M846.9,528 V536 M846.9,548 V555.5"/></g>
<g clip-path="url(#hl)" stroke="#22272a" stroke-width="2.2"><path d="M770,560 L794,536 M777,560 L801,536 M784,560 L808,536"/></g>
<g clip-path="url(#hr)" stroke="#22272a" stroke-width="2.2"><path d="M809,560 L833,536 M816,560 L840,536 M823,560 L847,536"/></g>
<path d="M842.1,535 H851.9 L846.9,540 Z M842.1,549.5 H851.9 L846.9,544.5 Z" fill="#22272a"/>
<path d="M1158.8,386.3 L1164.3,391.3 L1158.8,396.3" fill="none" stroke="#22272a" stroke-width="2.5" stroke-linecap="round" stroke-linejoin="round"/>
<path d="M1158.8,494.5 L1164.3,499.5 L1158.8,504.5" fill="none" stroke="#22272a" stroke-width="2.5" stroke-linecap="round" stroke-linejoin="round"/>
<defs><clipPath id="aq0"><rect x="908" y="614.1" width="11.6" height="13.4"/></clipPath></defs><rect x="909.1" y="615.4" width="9.399999999999999" height="10.8" fill="#dfe2e4" stroke="#22272a" stroke-width="2.2"/><g clip-path="url(#aq0)"><path d="M908,614.1 H916.6 L908,623.5 Z" fill="#22272a"/><path d="M910,627.5 L919.6,616.1" stroke="#22272a" stroke-width="2.2"/></g>
<defs><clipPath id="aq1"><rect x="942" y="614.1" width="11.6" height="13.4"/></clipPath></defs><rect x="943.1" y="615.4" width="9.399999999999999" height="10.8" fill="#dfe2e4" stroke="#22272a" stroke-width="2.2"/><g clip-path="url(#aq1)"><path d="M942,614.1 H950.6 L942,623.5 Z" fill="#22272a"/><path d="M944,627.5 L953.6,616.1" stroke="#22272a" stroke-width="2.2"/></g>
<defs><clipPath id="aq2"><rect x="963" y="614.1" width="11.6" height="13.4"/></clipPath></defs><rect x="964.1" y="615.4" width="9.399999999999999" height="10.8" fill="#dfe2e4" stroke="#22272a" stroke-width="2.2"/><g clip-path="url(#aq2)"><path d="M963,614.1 H971.6 L963,623.5 Z" fill="#22272a"/><path d="M965,627.5 L974.6,616.1" stroke="#22272a" stroke-width="2.2"/></g>
<defs><clipPath id="aq3"><rect x="996" y="614.1" width="11.6" height="13.4"/></clipPath></defs><rect x="997.1" y="615.4" width="9.399999999999999" height="10.8" fill="#dfe2e4" stroke="#22272a" stroke-width="2.2"/><g clip-path="url(#aq3)"><path d="M996,614.1 H1004.6 L996,623.5 Z" fill="#22272a"/><path d="M998,627.5 L1007.6,616.1" stroke="#22272a" stroke-width="2.2"/></g>
<defs><clipPath id="aq4"><rect x="1016" y="614.1" width="11.6" height="13.4"/></clipPath></defs><rect x="1017.1" y="615.4" width="9.399999999999999" height="10.8" fill="#dfe2e4" stroke="#22272a" stroke-width="2.2"/><g clip-path="url(#aq4)"><path d="M1016,614.1 H1024.6 L1016,623.5 Z" fill="#22272a"/><path d="M1018,627.5 L1027.6,616.1" stroke="#22272a" stroke-width="2.2"/></g>
<defs><clipPath id="aq5"><rect x="1050" y="614.1" width="11.6" height="13.4"/></clipPath></defs><rect x="1051.1" y="615.4" width="9.399999999999999" height="10.8" fill="#dfe2e4" stroke="#22272a" stroke-width="2.2"/><g clip-path="url(#aq5)"><path d="M1050,614.1 H1058.6 L1050,623.5 Z" fill="#22272a"/><path d="M1052,627.5 L1061.6,616.1" stroke="#22272a" stroke-width="2.2"/></g>
<path d="M925.9,615.1 H935.9 M930.9,610.1 V620.1" stroke="#22272a" stroke-width="1.9"/>
<path d="M972.5,615.1 H982.5 M977.5,610.1 V620.1" stroke="#22272a" stroke-width="1.9"/>
<path d="M1044.5,615.1 H1054.5 M1049.5,610.1 V620.1" stroke="#22272a" stroke-width="1.9"/>
<g fill="none" stroke="#22272a" stroke-width="2.2"><path d="M1258,210.9 H1267.5 M1270.2,210.9 H1273.5 M1276,210.9 H1279.6 M1282,210.9 H1285.7 M1288.2,210.9 H1293.8"/><path d="M1258,224.9 H1267.5 M1270.2,224.9 H1273.5 M1276,224.9 H1279.6 M1282,224.9 H1285.7 M1288.2,224.9 H1293.8"/><path d="M1262.8,210 V225.8 M1289,210 V225.8 M1263,214.9 H1289 M1263,221 H1289"/><rect x="1263" y="251" width="24.5" height="24.2" rx="2"/><path d="M1263,263.1 H1287.5 M1275.3,251 V275.2"/></g>
<path d="M1276.9,293.4 L1264.3,298.1 L1275.6,306.8 L1287.7,301.3 Z" fill="#cfd1d3"/>
<path d="M1264.3,298.1 L1275.6,306.8 L1275.1,319.4 L1264.3,311.8 Z" fill="#b4b7ba"/>
<path d="M1275.6,306.8 L1287.7,301.3 V314.1 L1275.1,319.4 Z" fill="#263034"/>
<path d="M1276.9,293.4 L1264.3,298.1 V311.8 L1275.1,319.4 L1287.7,314.1 V301.3 Z M1264.3,298.1 L1275.6,306.8 L1287.7,301.3 M1275.6,306.8 V319" fill="none" stroke="#22272a" stroke-width="2.1" stroke-linejoin="round"/>
<rect x="1259.9" y="336.2" width="6" height="29.3" fill="#22272a"/><rect x="1286" y="336.2" width="6" height="29.3" fill="#22272a"/>
<rect x="1262" y="342" width="2" height="2" fill="#f2f2f2"/><rect x="1288" y="342" width="2" height="2" fill="#f2f2f2"/>
<rect x="1262" y="345.9" width="2" height="2" fill="#f2f2f2"/><rect x="1288" y="345.9" width="2" height="2" fill="#f2f2f2"/>
<rect x="1262" y="349.8" width="2" height="2" fill="#f2f2f2"/><rect x="1288" y="349.8" width="2" height="2" fill="#f2f2f2"/>
<rect x="1262" y="353.8" width="2" height="2" fill="#f2f2f2"/><rect x="1288" y="353.8" width="2" height="2" fill="#f2f2f2"/>
<rect x="1262" y="357.8" width="2" height="2" fill="#f2f2f2"/><rect x="1288" y="357.8" width="2" height="2" fill="#f2f2f2"/>
<path d="M1265.9,343 H1286 M1265.9,359 H1286 M1270.4,349 H1281.6 M1270.4,353.2 H1281.6" stroke="#22272a" stroke-width="2"/>
<circle cx="1276" cy="398" r="15.2" fill="none" stroke="#22272a" stroke-width="2.5"/>
<circle cx="1276" cy="389.8" r="2.2" fill="#22272a"/>
<path d="M1276,395 V407" stroke="#22272a" stroke-width="3.8" stroke-linecap="round"/>
<g fill="none" stroke="#7e7e7e" stroke-width="2.2"><path d="M1302,648.7 H1311.4 V667.1 H1302"/><path d="M1351.7,648.7 H1342.6 V667.1 H1351.7"/><path d="M1311.4,653 H1342.6 M1311.4,656.7 H1342.6"/><path d="M1338.7,656.7 V681 M1314.6,656.7 Q1316,678 1338.7,681"/><path d="M1338.7,628.4 V653 M1314.6,653 Q1316,632 1338.7,628.4" stroke-dasharray="4.5,2.5"/><path d="M1302.5,654 L1309,648.9 M1302.5,661 L1311,652.5 M1305,667 L1311,661" /><path d="M1342.8,655 L1349,648.9 M1342.8,662 L1351.5,653 M1346,667 L1351.5,661.5"/><path d="M1367,636 V672" stroke-dasharray="4.5,2.8"/></g>
<path d="M1362.4,672.4 H1371.5 L1367,678 Z" fill="#7e7e7e"/>
<g transform="translate(0,0)"><path d="M1602.5,641 H1617.5 L1610,667.5 H1595.5 Z" fill="#e8eaeb" stroke="#22272a" stroke-width="2" stroke-linejoin="miter"/><path d="M1603.5,646.5 H1615.5 M1597.5,661.5 H1611.5" stroke="#22272a" stroke-width="2"/><path d="M1604,663 L1609,646 H1611.5 L1606.5,663 Z" fill="#22272a"/><path d="M1584.3,668.1 H1625.6" stroke="#22272a" stroke-width="2.2"/></g>
<g transform="translate(54,0)"><path d="M1602.5,641 H1617.5 L1610,667.5 H1595.5 Z" fill="#e8eaeb" stroke="#22272a" stroke-width="2" stroke-linejoin="miter"/><path d="M1603.5,646.5 H1615.5 M1597.5,661.5 H1611.5" stroke="#22272a" stroke-width="2"/><path d="M1603,646 H1606.5 L1605,662 H1603.5 Z M1607,646 H1611 L1605.5,661 Z" fill="#22272a"/><path d="M1584.3,668.1 H1625.6" stroke="#22272a" stroke-width="2.2"/></g>
<path d="M1687.8,783.8 L1694,791 L1702.6,775.8" fill="none" stroke="#22272a" stroke-width="3.8" stroke-linecap="round" stroke-linejoin="round"/>
<path d="M1514,218.5 L1703,254.8 V599.5 L1514,561 Z" fill="#c48c3b"/><path d="M1514,220 L1529,206.8 L1717.5,244 L1702,256 Z" fill="#b97f31"/><path d="M1529,206.8 L1717.5,244" stroke="#a9a9a9" stroke-width="1.5"/><path d="M1701.5,256.5 L1717.5,244 V587 L1701.5,599.8 Z" fill="#9f6d28"/><path d="M1717.5,244 V587" stroke="#9a9a9a" stroke-width="1.2"/><path d="M1518,224 L1520.5,224.5 V560 L1518,559.5 Z" fill="#b07a33"/><path d="M1526,226 L1532,227.2 V387 L1526,386 Z" fill="#a8742f"/><path d="M1520,550 L1700,587 V589.5 L1520,552.5 Z" fill="#b27c36"/><path d="M1520,555 L1700,592 V593.5 L1520,556.5 Z" fill="#b98238"/><path d="M1528,387 L1700,420 V422.5 L1528,389.5 Z" fill="#b07a34"/><path d="M1540.7,228.9 L1589.6,238.7 L1589.6,310.7 L1540.7,300.9 Z" fill="#1f96d9"/><path d="M1540.7,306.3 L1589.6,316.1 L1589.6,388.1 L1540.7,378.3 Z" fill="#1f96d9"/><path d="M1594.4,239.6 L1642.6,249.3 L1642.6,321.3 L1594.4,311.6 Z" fill="#1f96d9"/><path d="M1594.4,317.0 L1642.6,326.7 L1642.6,398.7 L1594.4,389.0 Z" fill="#1f96d9"/><path d="M1647.3,250.2 L1696.9,260.1 L1696.9,332.1 L1647.3,322.2 Z" fill="#1f96d9"/><path d="M1647.3,327.6 L1696.9,337.5 L1696.9,409.5 L1647.3,399.6 Z" fill="#1f96d9"/><path d="M1536.6,394.3 L1584.6,403.9 L1584.6,477.1 L1536.6,467.5 Z" fill="#1f96d9"/><path d="M1536.6,473.3 L1584.6,482.9 L1584.6,553.6 L1536.6,544.0 Z" fill="#1f96d9"/><path d="M1590.0,405.0 L1638.0,414.6 L1638.0,487.8 L1590.0,478.2 Z" fill="#1f96d9"/><path d="M1590.0,484.0 L1638.0,493.6 L1638.0,564.3 L1590.0,554.7 Z" fill="#1f96d9"/><path d="M1643.0,415.6 L1691.8,425.3 L1691.8,498.5 L1643.0,488.8 Z" fill="#1f96d9"/><path d="M1643.0,494.6 L1691.8,504.3 L1691.8,575.0 L1643.0,565.3 Z" fill="#1f96d9"/></svg>
</body></html>
